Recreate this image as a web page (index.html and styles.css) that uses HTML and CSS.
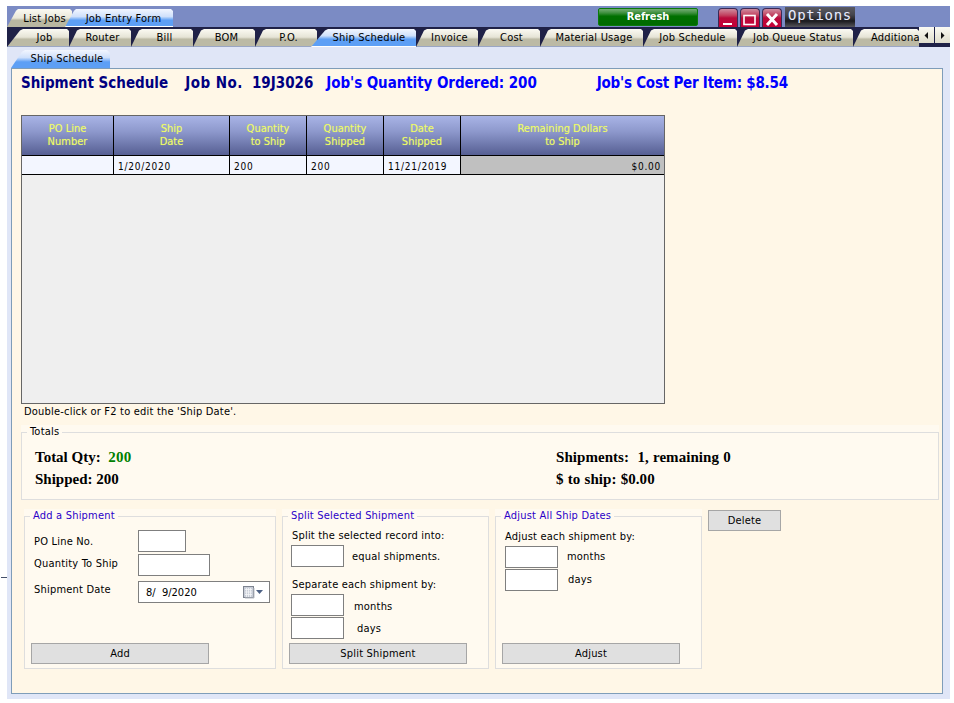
FILE: index.html
```html
<!DOCTYPE html>
<html lang="en">
<head>
<meta charset="utf-8">
<title>Ship Schedule</title>
<link rel="stylesheet" href="styles.css">
</head>
<body>
<span class="tick"></span>
<div class="app">
  <header class="topbar">
    <nav class="formtabs">
      <span class="ftab ftab-list">List Jobs</span>
      <span class="ftab ftab-entry">Job Entry Form</span>
    </nav>
    <button class="refresh">Refresh</button>
    <div class="winbtns">
      <span class="winbtn"><svg width="20" height="19" viewBox="0 0 20 19"><rect x="5" y="15" width="9" height="2" fill="#fff"/></svg></span>
      <span class="winbtn"><svg width="20" height="19" viewBox="0 0 20 19"><rect x="4" y="7.5" width="11" height="9" fill="none" stroke="#fff" stroke-width="1.6"/></svg></span>
      <span class="winbtn"><svg width="20" height="19" viewBox="0 0 20 19"><path d="M5 6 L15 17 M15 6 L5 17" stroke="#fff" stroke-width="3"/></svg></span>
    </div>
    <button class="options">Options</button>
  </header>

  <div class="tabstrip">
    <nav class="maintabs">
      <span class="tab tab-first w62">Job</span>
      <span class="tab w62">Router</span>
      <span class="tab w62">Bill</span>
      <span class="tab w62">BOM</span>
      <span class="tab w62">P.O.</span>
      <span class="tab tab-on w99">Ship Schedule</span>
      <span class="tab w62">Invoice</span>
      <span class="tab w62">Cost</span>
      <span class="tab w103">Material Usage</span>
      <span class="tab w94">Job Schedule</span>
      <span class="tab w116">Job Queue Status</span>
      <span class="tab tab-last">Additional</span>
    </nav>
    <div class="scrollers">
      <span class="scroller"><svg width="5" height="7" viewBox="0 0 5 7"><path d="M4 0V7L0.5 3.5Z" fill="#111"/></svg></span>
      <span class="scroller"><svg width="5" height="7" viewBox="0 0 5 7"><path d="M1 0V7L4.5 3.5Z" fill="#111"/></svg></span>
    </div>
  </div>

  <div class="body">
    <div class="subtabs"><span class="subtab">Ship Schedule</span></div>
    <main class="panel">
      <h1 class="title">
        <span class="navy t1">Shipment Schedule</span>
        <span class="navy t2">Job No.</span>
        <span class="navy t3">19J3026</span>
        <span class="blue t4">Job's Quantity Ordered: 200</span>
        <span class="blue t5">Job's Cost Per Item: $8.54</span>
      </h1>

      <section class="grid">
        <div class="grow ghead">
          <div>PO Line<br>Number</div>
          <div>Ship<br>Date</div>
          <div>Quantity<br>to Ship</div>
          <div>Quantity<br>Shipped</div>
          <div>Date<br>Shipped</div>
          <div>Remaining Dollars<br>to Ship</div>
        </div>
        <div class="grow gdata">
          <div></div>
          <div>1/20/2020</div>
          <div>200</div>
          <div>200</div>
          <div>11/21/2019</div>
          <div class="money">$0.00</div>
        </div>
      </section>
      <p class="hint">Double-click or F2 to edit the 'Ship Date'.</p>

      <div class="fsback totals-back">
        <fieldset class="totals">
          <legend>Totals</legend>
          <div class="tcol">
            <div>Total Qty:&nbsp; <span class="green">200</span></div>
            <div>Shipped: 200</div>
          </div>
          <div class="tcol tcol-r">
            <div>Shipments:&nbsp; 1, remaining 0</div>
            <div>$ to ship: $0.00</div>
          </div>
        </fieldset>
      </div>

      <div class="actions">
        <div class="fsback w252">
          <fieldset class="group">
            <legend>Add a Shipment</legend>
            <div class="stack">
              <div class="frow r1"><label>PO Line No.</label><span class="input i48"></span></div>
              <div class="frow r2"><label>Quantity To Ship</label><span class="input i72"></span></div>
              <div class="frow r3"><label>Shipment Date</label>
                <span class="input date">8/&nbsp; 9/2020
                  <svg class="cal" width="20" height="13" viewBox="0 0 20 13">
                    <rect x="0.5" y="0.5" width="10" height="11" fill="#c9ced8" stroke="#7d838f"/>
                    <path d="M2 3.5H9M2 6H9M2 8.5H9M3.5 2V11M5.5 2V11M7.5 2V11" stroke="#f4f5f8" stroke-width="0.8"/>
                    <path d="M11 2V12H2" fill="none" stroke="#b9bcc4"/>
                    <path d="M13 4H20L16.5 8Z" fill="#4d6185"/>
                  </svg>
                </span>
              </div>
              <button class="btn b-add">Add</button>
            </div>
          </fieldset>
        </div>

        <div class="fsback w207">
          <fieldset class="group">
            <legend>Split Selected Shipment</legend>
            <div class="stack">
              <p class="lead s1">Split the selected record into:</p>
              <div class="irow s2"><span class="input i53"></span><span class="after a8">equal shipments.</span></div>
              <p class="lead s3">Separate each shipment by:</p>
              <div class="irow s4"><span class="input i53"></span><span class="after a10 low">months</span></div>
              <div class="irow s5"><span class="input i53"></span><span class="after a13">days</span></div>
              <button class="btn b-split">Split Shipment</button>
            </div>
          </fieldset>
        </div>

        <div class="fsback w207">
          <fieldset class="group">
            <legend>Adjust All Ship Dates</legend>
            <div class="stack">
              <p class="lead j1">Adjust each shipment by:</p>
              <div class="irow j2"><span class="input i53"></span><span class="after a9 high">months</span></div>
              <div class="irow j3"><span class="input i53"></span><span class="after a10 high">days</span></div>
              <button class="btn b-adjust">Adjust</button>
            </div>
          </fieldset>
        </div>

        <button class="btn b-delete">Delete</button>
      </div>
    </main>
  </div>
</div>
</body>
</html>
```

FILE: styles.css
```css
* { box-sizing: border-box; }
html, body { margin: 0; padding: 0; background: #fff; }
body {
  width: 954px; height: 703px; overflow: hidden; position: relative;
  font-family: "DejaVu Sans Condensed", "DejaVu Sans", sans-serif;
  font-size: 11px; color: #000; letter-spacing: 0.2px;
}
p, h1 { margin: 0; }
.tick { position: absolute; left: 1px; top: 577px; width: 6px; height: 1px; background: #44506a; }
.app { margin: 6px 0 0 7px; width: 943px; height: 693px; display: flex; flex-direction: column; }

.topbar { height: 21px; background: #7b8bc4; display: flex; align-items: flex-start; flex: none; }
.formtabs { display: flex; width: 591px; padding-top: 3px; }
.ftab {
  height: 18px; display: flex; align-items: center; justify-content: center;
  clip-path: polygon(0 100%, 9px 10%, 11px 0, calc(100% - 2px) 0, 100% 2px, 100% 100%);
}
.ftab-list { width: 65px; padding-left: 10px; background: linear-gradient(#fbfaf2 0, #e9e7d9 50%, #b9b7a1 62%, #b9b7a1 100%); }
.ftab-entry { width: 108px; margin-left: -7px; padding-left: 9px; background: linear-gradient(#f2f6ff 0, #cfe0fb 42%, #5d9ff5 62%, #5d9ff5 95%, #fff 95%); }

.refresh {
  margin: 2px 0 0 0; width: 100px; height: 18px; padding: 0 0 2px; border: 1px solid #0a7a0a; border-radius: 2px;
  background: linear-gradient(#74ad74 0, #3d8f3d 25%, #007000 45%, #006a00 100%);
  color: #fff; font: bold 11px "DejaVu Sans Condensed", sans-serif; letter-spacing: -0.1px;
}
.winbtns { display: flex; gap: 2px; margin: 2px 0 0 20px; }
.winbtn {
  width: 20px; height: 19px; border: 1px solid #3a2a55; border-bottom: 0; border-radius: 4px 4px 0 0; display: block; overflow: hidden;
  background: linear-gradient(#cf8c9f 0, #c2405f 35%, #b90a3b 50%, #c40038 100%);
}
.winbtn svg { display: block; margin: -1px; }
.options {
  margin: 1px 0 0 3px; width: 70px; height: 20px; padding: 0 0 5px; border: 0;
  background: linear-gradient(#5a5a62 0, #44444c 40%, #1b1b1f 70%, #55555a 100%);
  color: #e8ecff; font: 14px "DejaVu Sans Mono", monospace; letter-spacing: 0.7px;
}

.tabstrip { height: 20px; background: #1f2147; display: flex; flex: none; }
.maintabs { width: 912px; display: flex; overflow: hidden; }
.tab {
  flex: none; height: 18px; margin-top: 2px; padding: 0 0 0 5px; display: flex; align-items: center; justify-content: center;
  background: linear-gradient(#fbfaf3 0, #e6e4d6 48%, #bcbaa5 60%, #bcbaa5 100%);
  clip-path: polygon(0 100%, 8px 8%, 11px 0, calc(100% - 2px) 0, 100% 2px, 100% 100%);
  border-bottom: 1px solid #9aa6c4;
}
.tab-first { padding-left: 13px; clip-path: polygon(0 100%, 13px 8%, 16px 0, calc(100% - 2px) 0, 100% 2px, 100% 100%); }
.w62 { width: 62px; }
.w99 { width: 105px; margin-left: -6px; }
.w103 { width: 103px; }
.w94 { width: 94px; }
.w116 { width: 116px; }
.tab-on {
  padding-left: 11px;
  background: linear-gradient(#f2f6ff 0, #cfe0fb 40%, #5d9ff5 60%, #5d9ff5 90%); border-bottom: 1px solid #fff;
  clip-path: polygon(0 100%, 14px 8%, 17px 0, calc(100% - 2px) 0, 100% 2px, 100% 100%);
}
.tab-last { width: 66px; padding-left: 18px; justify-content: flex-start; white-space: nowrap; overflow: hidden; }
.scrollers { display: flex; gap: 1px; height: 16px; }
.scroller { width: 15px; height: 16px; background: linear-gradient(#fbfaf3, #dfddcc); display: flex; align-items: center; justify-content: center; }

.body { flex: 1; background: #e0e6f7; padding: 3px 7px 5px 4px; display: flex; flex-direction: column; }
.subtabs { height: 18px; display: flex; flex: none; }
.subtab {
  width: 99px; height: 18px; padding: 0 0 1px 13px; display: flex; align-items: center; justify-content: center;
  background: linear-gradient(#f2f6ff 0, #cfe0fb 42%, #5d9ff5 66%, #5d9ff5 100%);
  clip-path: polygon(0 100%, 11px 10%, 14px 0, calc(100% - 3px) 0, 100% 3px, 100% 100%);
}
.panel { flex: 1; background: #fff7e7; border: 1px solid #7f9db9; padding: 0 3px 0 9px; }

.title { height: 46px; padding-top: 5px; display: flex; font: bold 15px/18px "DejaVu Sans Condensed", sans-serif; letter-spacing: 0; white-space: nowrap; }
.navy { color: #000080; }
.blue { color: #0000ff; }
.t2 { margin-left: 17px; letter-spacing: 0.5px; }
.t3 { margin-left: 9px; }
.t4 { margin-left: 13px; letter-spacing: -0.07px; }
.t5 { margin-left: 60px; letter-spacing: -0.23px; }

.grid { width: 644px; height: 289px; background: #efefef; border: 1px solid #666; }
.grow { display: grid; grid-template-columns: 92px 116px 77px 77px 77px 1fr; }
.ghead { height: 40px; background: linear-gradient(#a9b4e6 0, #8d98cc 40%, #565f93 100%); border-bottom: 1px solid #000; }
.ghead div { color: #eefc66; text-align: center; padding-top: 6px; line-height: 13px; border-right: 1px solid #000; letter-spacing: 0; text-shadow: 0 0 1px rgba(238, 252, 102, 0.5); }
.ghead div:last-child { border-right: 0; }
.gdata { height: 19px; background: #f3f6ff; border-bottom: 1px solid #000; font-size: 10px; letter-spacing: 0.75px; }
.gdata div { border-right: 1px solid #000; padding: 4px 0 0 4px; line-height: 13px; }
.gdata .money { border-right: 0; background: #c0c0c0; text-align: right; padding-right: 3px; }

.hint { height: 21px; padding: 1px 0 0 3px; line-height: 13px; }

.fsback { background: #fffaf0; display: flex; flex: none; }
fieldset { margin: 0; border: 1px solid #dedede; min-width: 0; width: 100%; }
legend { padding: 0 3px; line-height: 14px; }
.totals-back { width: 918px; height: 75px; }
.totals { display: flex; padding: 7px 0 0 13px; height: 75px; font: bold 15px/22px "Liberation Serif", serif; letter-spacing: 0; }
.totals legend { font: 11px/14px "DejaVu Sans Condensed", sans-serif; letter-spacing: 0.2px; margin-left: -8px; }
.tcol { width: 521px; flex: none; }
.tcol-r { letter-spacing: 0.05px; word-spacing: 0.4px; }
.green { color: #008000; letter-spacing: 0.3px; }

.actions { display: flex; gap: 6px; padding: 0 0 0 3px; margin-top: 9px; align-items: flex-start; }
.w252 { width: 252px; height: 160px; }
.w207 { width: 207px; height: 160px; }
.group { padding: 0; height: 160px; }
.group legend { color: #2a00c8; margin-left: 5px; }
.stack { position: relative; height: 145px; display: flex; flex-direction: column; }
.frow { display: flex; padding-left: 9px; }
.frow label { width: 104px; }
.r1 { height: 22px; margin-top: 7px; align-items: center; }
.r2 { height: 22px; margin-top: 2px; }
.r2 label { padding-top: 3px; }
.r3 { height: 22px; margin-top: 5px; }
.r3 label { padding-top: 2px; }
.input { display: block; height: 22px; background: #fff; border: 1px solid #7f7f7f; flex: none; }
.i48 { width: 48px; }
.i72 { width: 72px; }
.i53 { width: 53px; }
.date { width: 132px; display: flex; align-items: center; padding-left: 7px; justify-content: space-between; padding-right: 6px; letter-spacing: 0; }
.cal { margin-top: 1px; }
.btn {
  display: block; width: 178px; height: 21px; padding: 0; flex: none;
  background: #e0e0e0; border: 1px solid #a6a6a6; color: #000; font: 11px "DejaVu Sans Condensed", sans-serif; letter-spacing: 0.2px;
}
.stack .btn { margin-top: auto; margin-bottom: 4px; }
.b-add { margin-left: 6px; }
.b-split { margin-left: 6px; }
.b-adjust { margin-left: 6px; }
.b-delete { width: 73px; margin-top: 1px; }
.lead { padding-left: 9px; line-height: 13px; }
.irow { display: flex; padding-left: 8px; align-items: center; }
.after { line-height: 13px; }
.low { padding-top: 3px; }
.high { padding-bottom: 2px; }
.a8 { margin-left: 8px; }
.a9 { margin-left: 9px; }
.a10 { margin-left: 10px; }
.a13 { margin-left: 13px; }
.s1 { margin-top: 6px; }
.s2 { margin-top: 3px; }
.s3 { margin-top: 11px; }
.s4 { margin-top: 3px; }
.s5 { margin-top: 1px; }
.j1 { margin-top: 7px; padding-left: 9px; }
.j2 { margin-top: 3px; padding-left: 9px; }
.j3 { margin-top: 1px; padding-left: 9px; }
```
